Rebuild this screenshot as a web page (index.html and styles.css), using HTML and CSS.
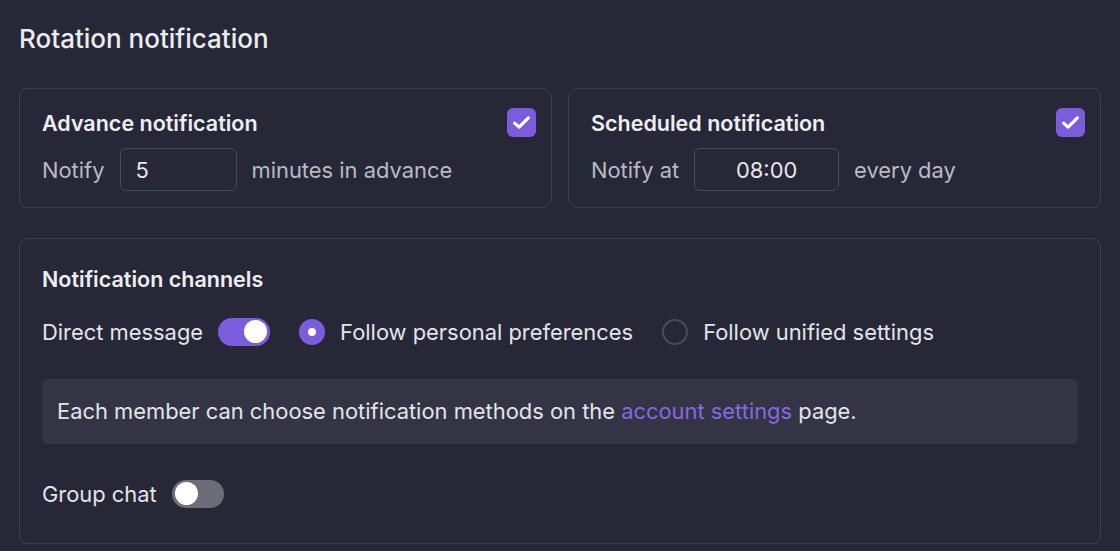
FILE: index.html
```html
<!DOCTYPE html>
<html lang="en">
<head>
  <meta charset="utf-8">
  <meta name="viewport" content="width=device-width, initial-scale=1">
  <title>Rotation notification</title>
  <link rel="stylesheet" href="styles.css">
</head>
<body>
  <h2 class="title">Rotation notification</h2>

  <div class="cards">
    <div class="card">
      <div class="card-head">
        <span class="card-title">Advance notification</span>
        <span class="checkbox">
          <svg width="19" height="19" viewBox="0 0 18 18"><path d="M2.5 9.6l4.2 3.8L15.5 4.6" fill="none" stroke="#fff" stroke-width="3" stroke-linecap="round" stroke-linejoin="round"/></svg>
        </span>
      </div>
      <div class="card-row">
        <span class="muted">Notify</span>
        <span class="field field-num">5</span>
        <span class="muted">minutes in advance</span>
      </div>
    </div>

    <div class="card">
      <div class="card-head">
        <span class="card-title">Scheduled notification</span>
        <span class="checkbox">
          <svg width="19" height="19" viewBox="0 0 18 18"><path d="M2.5 9.6l4.2 3.8L15.5 4.6" fill="none" stroke="#fff" stroke-width="3" stroke-linecap="round" stroke-linejoin="round"/></svg>
        </span>
      </div>
      <div class="card-row">
        <span class="muted">Notify at</span>
        <span class="field field-time">08:00</span>
        <span class="muted">every day</span>
      </div>
    </div>
  </div>

  <div class="card channels">
    <div class="card-title">Notification channels</div>

    <div class="channel-row">
      <span>Direct message</span>
      <span class="toggle on"><span class="knob"></span></span>
      <label class="radio-opt"><span class="radio checked"></span>Follow personal preferences</label>
      <label class="radio-opt"><span class="radio"></span>Follow unified settings</label>
    </div>

    <div class="info">Each member can choose notification methods on the <a href="#">account settings</a> page.</div>

    <div class="channel-row group-row">
      <span>Group chat</span>
      <span class="toggle"><span class="knob"></span></span>
    </div>
  </div>
</body>
</html>
```

FILE: styles.css
```css
body {
  margin: 0;
  padding: 0 19px;
  background: #262837;
  color: #e4e4e9;
  font-family: Inter, "Noto Sans", sans-serif;
  font-size: 21.9px;
}
.title {
  margin: 0;
  padding-top: 24px;
  height: 88px;
  box-sizing: border-box;
  font-size: 26px;
  font-weight: 500;
  line-height: 30px;
  color: #ececf0;
}
.cards {
  display: flex;
  gap: 16px;
  width: 1082px;
}
.card {
  flex: 1;
  border: 1px solid #3b3e4e;
  border-radius: 9px;
  padding: 19px 15px 16px 22px;
}
.card-head {
  display: flex;
  justify-content: space-between;
  align-items: center;
  height: 29px;
}
.card-title {
  font-weight: 600;
  font-size: 21.5px;
  color: #eeeef2;
}
.checkbox {
  width: 29px;
  height: 29px;
  border-radius: 6px;
  background: #7b5cdc;
  display: flex;
  align-items: center;
  justify-content: center;
}
.card-row {
  display: flex;
  align-items: center;
  gap: 15px;
  margin-top: 11px;
}
.muted {
  color: #b9bac3;
}
.field {
  height: 43px;
  box-sizing: border-box;
  border: 1.5px solid #474a59;
  border-radius: 6px;
  display: flex;
  align-items: center;
  color: #e6e6ea;
}
.field-num {
  width: 117px;
  padding-left: 15px;
}
.field-time {
  width: 145px;
  justify-content: center;
}
.channels {
  width: 1082px;
  box-sizing: border-box;
  margin-top: 30px;
  padding: 26px 22px 35px 22px;
}
.channels .card-title {
  display: block;
  line-height: 28px;
}
.channel-row {
  display: flex;
  align-items: center;
  height: 29px;
  margin-top: 24px;
}
.toggle {
  position: relative;
  width: 52px;
  height: 28px;
  border-radius: 14px;
  background: #6d6d79;
  margin-left: 15px;
}
.toggle .knob {
  position: absolute;
  top: 2.5px;
  left: 3px;
  width: 23px;
  height: 23px;
  border-radius: 50%;
  background: #fff;
}
.toggle.on {
  background: #7b5cdc;
}
.toggle.on .knob {
  left: 26px;
}
.radio-opt {
  display: flex;
  align-items: center;
  gap: 15px;
  margin-left: 29px;
}
.radio {
  width: 26px;
  height: 26px;
  box-sizing: border-box;
  border: 2px solid #4a4d5c;
  border-radius: 50%;
}
.radio.checked {
  border: none;
  background: #7b5cdc;
  display: flex;
  align-items: center;
  justify-content: center;
}
.radio.checked::after {
  content: "";
  width: 8px;
  height: 8px;
  border-radius: 50%;
  background: #fff;
}
.info {
  margin-top: 33px;
  height: 65px;
  box-sizing: border-box;
  padding: 0 15px;
  line-height: 65px;
  background: #333544;
  border-radius: 6px;
}
.info a {
  color: #8867e6;
  text-decoration: none;
}
.group-row {
  margin-top: 35px;
}
```
